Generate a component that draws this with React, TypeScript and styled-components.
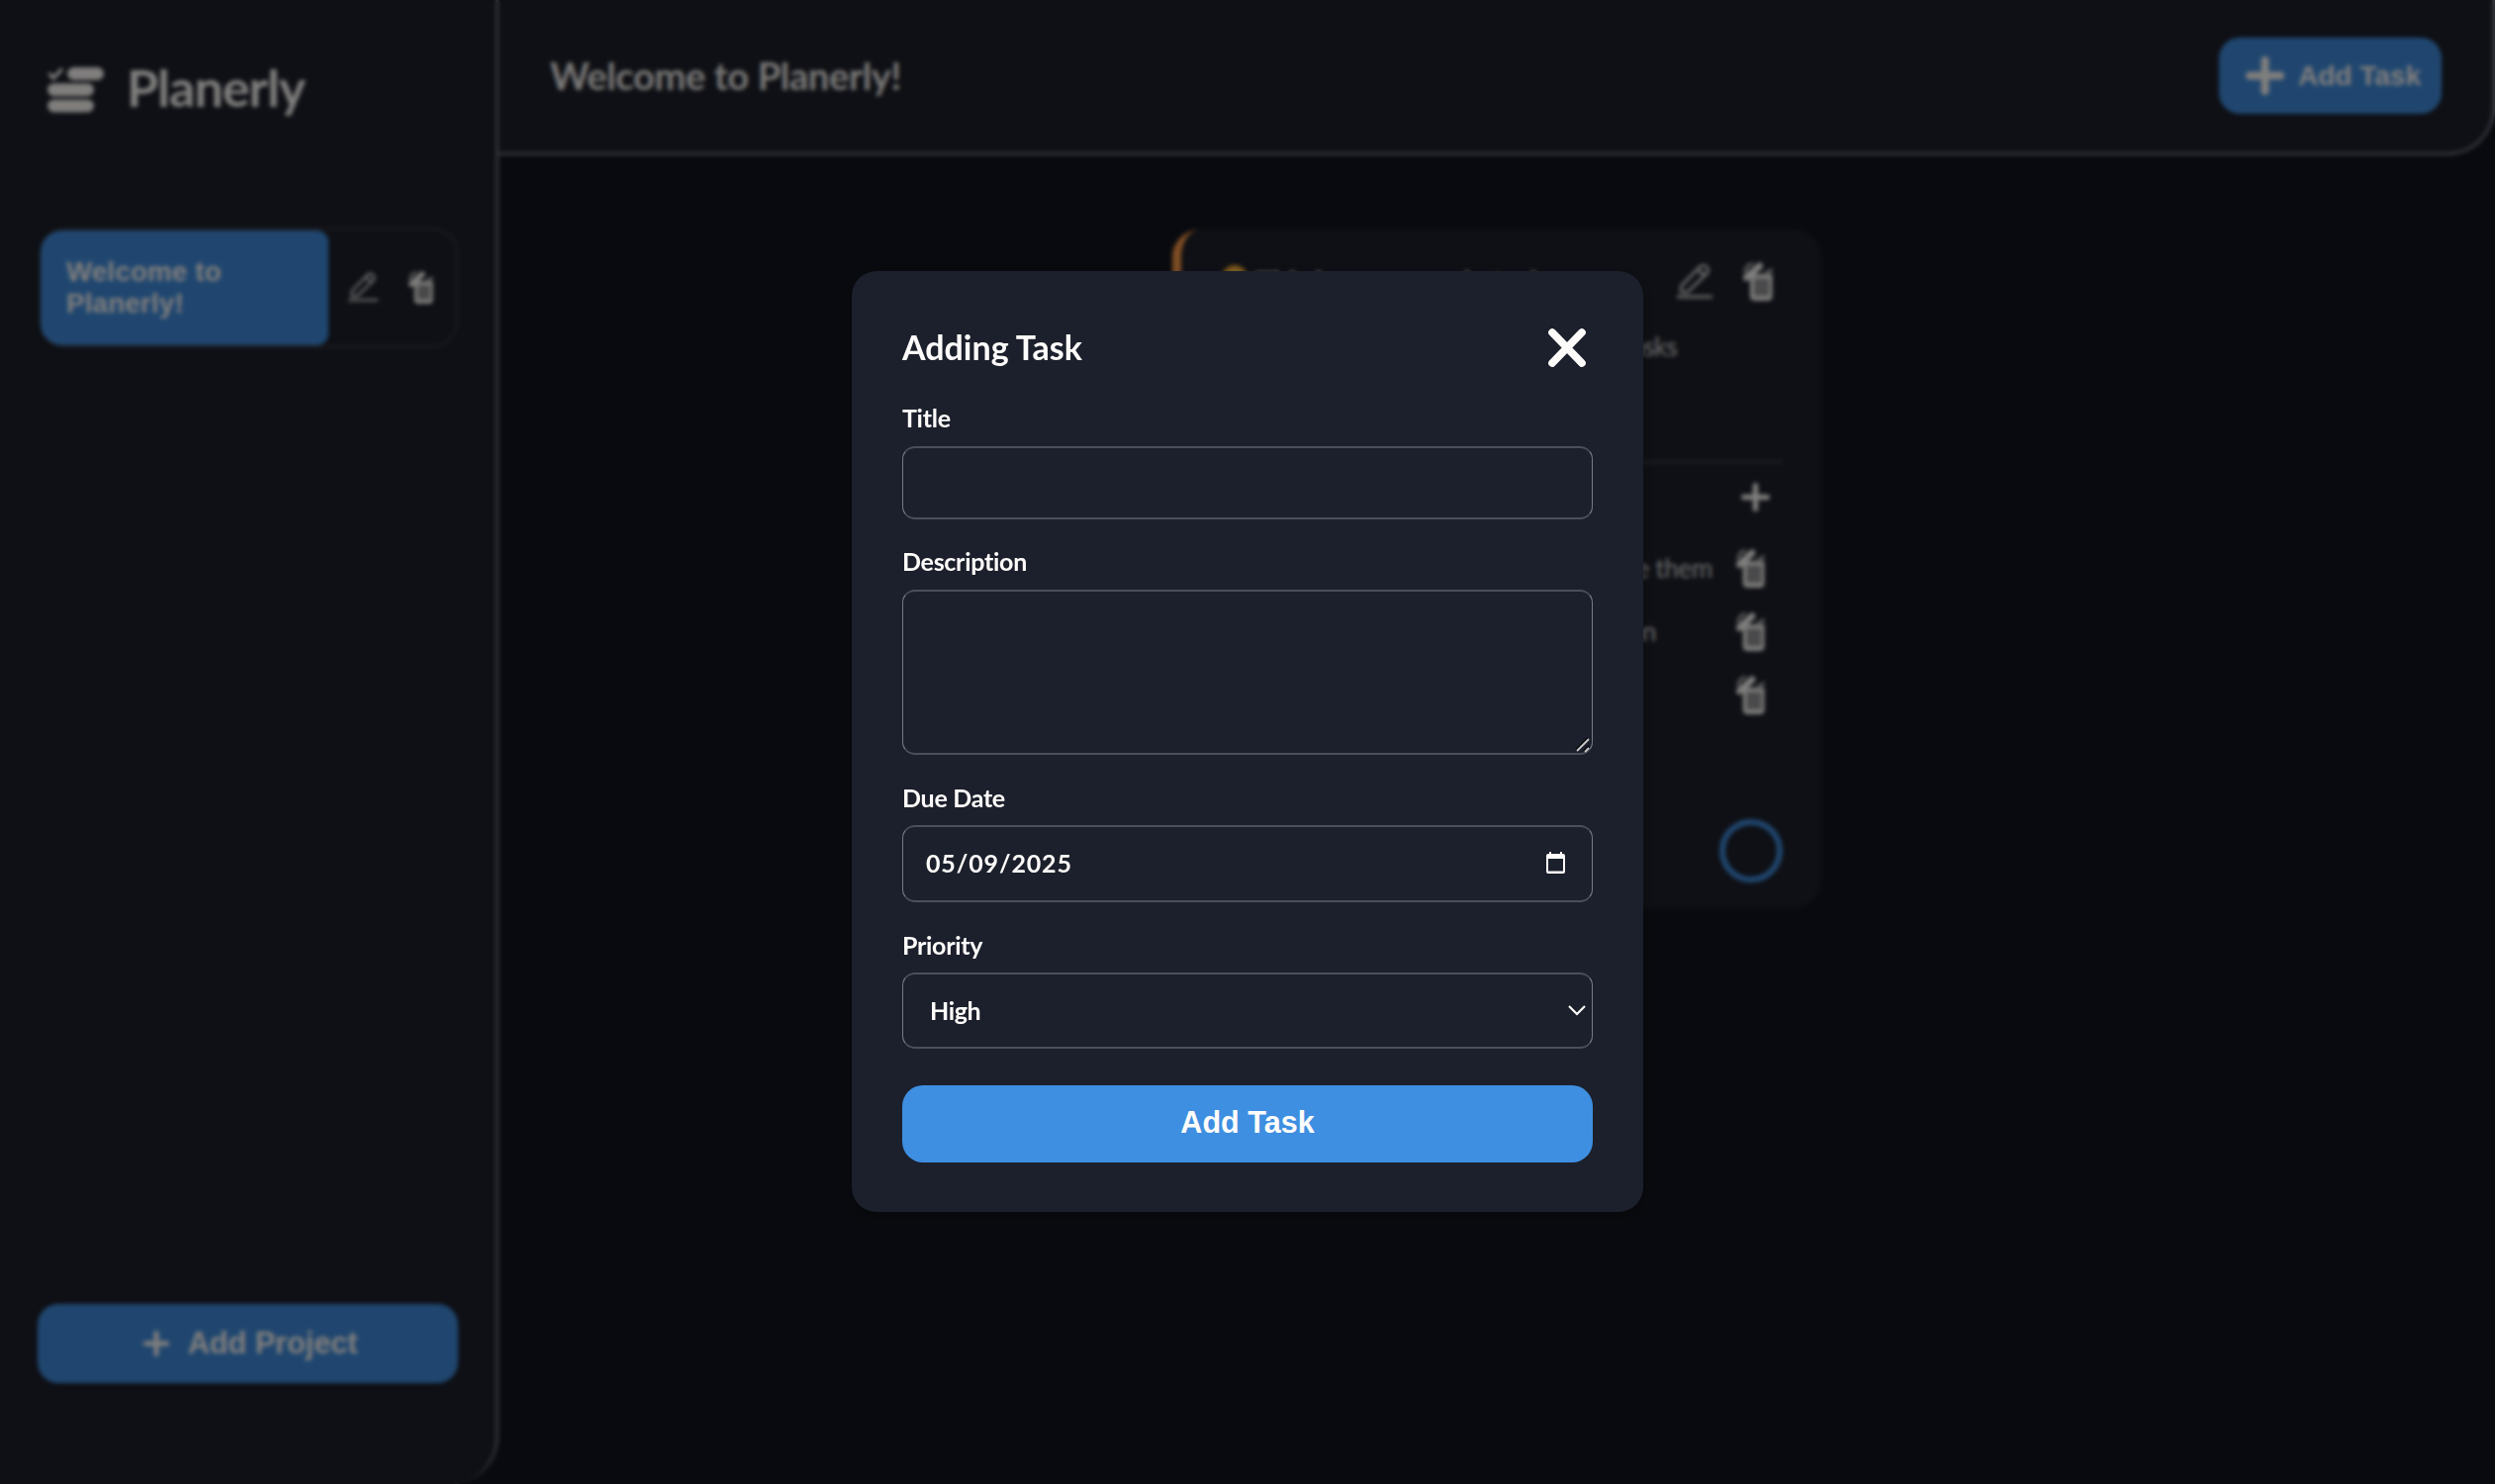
import React from 'react';
import styled, { createGlobalStyle } from 'styled-components';

const humanist = `Lato, "Open Sans", sans-serif`;
const grotesque = `"Liberation Sans", Arial, sans-serif`;

const GlobalStyle = createGlobalStyle`
  *, *::before, *::after { box-sizing: border-box; }
  html, body { margin: 0; height: 100%; background: #12151e; overflow: hidden; }
  body { font-family: ${humanist}; color: #fefcfa; }
  h1, h2, h3, p { margin: 0; font-weight: 700; }
  button { border: 0; cursor: pointer; font-family: ${grotesque}; font-weight: 700; color: #fefcfa; }
`;

const Page = styled.div`
  display: grid;
  grid-template-columns: 504px 1fr;
  height: 1500px;
  width: 2522px;
`;

const Sidebar = styled.aside`
  display: flex;
  flex-direction: column;
  background: #1d202a;
  border-right: 3px solid #666b78;
  border-bottom-right-radius: 48px;
  padding: 59px 38px 102px 38px;
`;

const Brand = styled.div`
  display: flex;
  align-items: center;
  height: 64px;
  padding-left: 10px;
  gap: 23px;
`;

const BrandName = styled.h1`
  font-size: 52px;
  line-height: 64px;
  padding-bottom: 7px;
  letter-spacing: -1px;
  white-space: nowrap;
`;

const ProjectRow = styled.div`
  display: flex;
  margin-top: 107px;
  margin-left: 2px;
  width: 423px;
  height: 122px;
  border: 3px solid #30323b;
  border-left-width: 1px;
  border-radius: 25px;
`;

const ProjectName = styled.button`
  width: 291px;
  padding: 0 26px;
  text-align: left;
  font-size: 27.5px;
  line-height: 32px;
  letter-spacing: 0.3px;
  background: #408ddf;
  border-radius: 22px 12px 12px 22px;
`;

const ProjectActions = styled.div`
  flex: 1;
  display: flex;
  align-items: center;
  padding: 0 0 2px 20px;
  gap: 31px;
`;

const AddProject = styled.button`
  display: flex;
  align-items: center;
  justify-content: center;
  gap: 19px;
  width: 425px;
  height: 80px;
  margin-top: auto;
  padding: 0 0 1px 10px;
  border-radius: 21px;
  background: #408ddf;
  font-size: 30.6px;
  svg { margin-left: -5px; }
`;

const Main = styled.main`
  display: flex;
  flex-direction: column;
`;

const Header = styled.header`
  display: flex;
  align-items: center;
  justify-content: space-between;
  height: 157px;
  background: #1d202a;
  border: solid #666b78;
  border-width: 0 3px 3px 0;
  border-bottom-right-radius: 48px;
  padding: 0 51px 1px 52px;
`;

const ProjectTitle = styled.h2`
  padding-bottom: 2px;
  font-size: 38px;
  letter-spacing: -0.35px;
  color: #f2f0ee;
`;

const AddTask = styled.button`
  display: flex;
  align-items: center;
  gap: 14px;
  width: 225px;
  height: 77px;
  padding: 0 0 0 27px;
  border-radius: 21px;
  background: #408ddf;
  font-size: 28px;
`;

const Board = styled.section`
  display: flex;
  justify-content: center;
  padding-top: 75px;
`;

const Card = styled.article`
  display: flex;
  flex-direction: column;
  width: 656px;
  height: 686px;
  padding: 29px 39px 26px 41px;
  background: #1d202a;
  border-left: 9px solid #fb9a48;
  border-radius: 28px;
`;

const CardHead = styled.div`
  display: flex;
  flex: none;
  align-items: center;
  height: 46px;
`;

const PriorityDot = styled.span`
  width: 26px;
  height: 26px;
  margin: 0 8px 6px 0;
  border-radius: 50%;
  background: radial-gradient(circle, #ffd060 30%, #f59a20 75%);
`;

const CardTitle = styled.h3`
  flex: 1;
  padding-top: 2px;
  font-size: 30px;
  line-height: 40px;
  letter-spacing: -0.55px;
`;

const CardTools = styled.div`
  display: flex;
  align-items: center;
  gap: 31px;
  margin-right: 10px;
`;

const CardText = styled.p`
  flex: none;
  height: 130px;
  margin-top: 25px;
  padding-right: 107px;
  text-align: right;
  white-space: nowrap;
  font-size: 26px;
  line-height: 36px;
  font-weight: 400;
  letter-spacing: -0.7px;
  color: #d8d8d8;
`;

const Divider = styled.hr`
  width: 100%;
  height: 4px;
  margin: 3px 0 0;
  border: 0;
  flex: none;
  background: #32343d;
`;

const SubtaskHead = styled.div`
  display: flex;
  flex: none;
  justify-content: space-between;
  align-items: center;
  height: 66px;
  margin-bottom: 7px;
  padding-right: 13px;
  font-size: 26px;
`;

const Subtask = styled.div<{ $inset: number }>`
  display: flex;
  flex: none;
  justify-content: flex-end;
  align-items: center;
  height: 64px;
  padding-right: 18px;
  white-space: nowrap;
  font-size: 26px;
  letter-spacing: -0.3px;
  color: #d8d8d8;
  span { margin-right: ${(p) => p.$inset}px; }
`;

const DoneToggle = styled.button`
  flex: none;
  width: 64px;
  height: 64px;
  margin-top: auto;
  align-self: flex-end;
  border: 6px solid #408ddf;
  border-radius: 50%;
  background: transparent;
`;

const Backdrop = styled.div`
  position: fixed;
  inset: 0;
  display: flex;
  align-items: flex-start;
  justify-content: center;
  padding-top: 274px;
  background: rgba(0, 0, 0, 0.5);
  backdrop-filter: blur(2px);
`;

const Dialog = styled.form`
  display: flex;
  flex-direction: column;
  width: 800px;
  height: 951px;
  padding: 51px 51px 50px;
  border-radius: 25px;
  background: #1c202c;
  box-shadow: 0 4px 12px rgba(0, 0, 0, 0.2);
`;

const DialogHead = styled.div`
  display: flex;
  flex: none;
  align-items: center;
  justify-content: space-between;
  height: 53px;
  padding-right: 7px;
`;

const DialogTitle = styled.h2`
  padding-bottom: 2px;
  font-size: 34px;
  line-height: 48px;
  letter-spacing: 0;
`;

const CloseButton = styled.button`
  padding: 0;
  line-height: 0;
  background: none;
`;

const Field = styled.label<{ $top: number }>`
  position: relative;
  display: flex;
  flex: none;
  flex-direction: column;
  margin-top: ${(p) => p.$top}px;
`;

const FieldName = styled.span<{ $line?: number }>`
  height: 42px;
  line-height: ${(p) => p.$line ?? 28}px;
  font-size: 25px;
  font-weight: 700;
  letter-spacing: -0.28px;
`;

const box = `
  width: 698px;
  border: solid #4b4e5c;
  border-width: 2px 1px;
  border-left-color: #767a89;
  border-right-color: #767a89;
  border-radius: 13px;
  background: transparent;
  color: #fefcfa;
  font-family: ${humanist};
  font-size: 25px;
  font-weight: 700;
  outline: none;
`;

const TextInput = styled.input`
  ${box}
  height: 74px;
  padding: 0 23px;
`;

const TextArea = styled.textarea`
  ${box}
  height: 167px;
  padding: 20px 23px;
  resize: none;
`;

const ResizeHandle = styled.svg`
  position: absolute;
  right: 2px;
  bottom: 2px;
`;

const DateBox = styled.div`
  ${box}
  display: flex;
  align-items: center;
  justify-content: space-between;
  height: 78px;
  padding: 0 27px 2px 23px;
  letter-spacing: 0.85px;
`;

const SelectBox = styled.div`
  ${box}
  display: flex;
  align-items: center;
  justify-content: space-between;
  height: 77px;
  padding: 0 6px 1px 27px;
  letter-spacing: -0.4px;
`;

const Submit = styled.button`
  flex: none;
  width: 698px;
  height: 78px;
  margin-top: 37px;
  padding: 0 0 4px;
  border-radius: 21px;
  background: #3e8fe1;
  font-size: 30.6px;
`;

const Logo = () => (
  <svg width="57" height="46" viewBox="0 0 57 46" fill="#fefcfa">
    <path d="M1.5 6 L6 11 L15 1.5" fill="none" stroke="#fefcfa" strokeWidth="3.4" />
    <rect x="20" y="0" width="37" height="13" rx="6.5" />
    <rect x="0" y="16.2" width="47" height="13" rx="6.5" />
    <rect x="0" y="32.4" width="47" height="13" rx="6.5" />
  </svg>
);

const Plus = ({ size, weight }: { size: number; weight: number }) => (
  <svg width={size} height={size} viewBox={`0 0 ${size} ${size}`}>
    <path
      d={`M${size / 2} ${weight / 2} V${size - weight / 2} M${weight / 2} ${size / 2} H${size - weight / 2}`}
      stroke="#fefcfa"
      strokeWidth={weight}
      strokeLinecap="round"
    />
  </svg>
);

const Pencil = ({ size }: { size: number }) => (
  <svg width={size} height={size} viewBox="0 0 36 36" fill="none" stroke="#d4d4d4" strokeWidth="2.8" strokeLinejoin="round">
    <path d="M5 22.5 L23.5 3.5 Q26.5 0.8 30 3.6 Q33.2 7 30.6 10.2 L12 28 Q8 30.4 4.6 28.8 Q3.2 26 5 22.5 Z" />
    <path d="M22 5 Q23 11 29 11.5" />
    <path d="M0 34 H36" strokeWidth="3.4" stroke="#bcbcbc" />
  </svg>
);

const Trash = ({ width, height }: { width: number; height: number }) => (
  <svg width={width} height={height} viewBox="0 0 30 40" preserveAspectRatio="none">
    <path d="M7 12.5 H29.5 V35.5 Q29.5 40 25 40 H11.5 Q7 40 7 35.5 Z" fill="#fefcfa" />
    <path d="M11.5 17 H25.5 V35 H11.5 Z" fill="#d0d0d2" />
    <path d="M12.6 17 V35 M16.6 17 V35 M20.6 17 V35 M24.6 17 V35" stroke="#4a4b50" strokeWidth="1.8" />
    <path d="M3.5 16 L16.5 4" stroke="#fefcfa" strokeWidth="7" strokeLinecap="round" />
    <path d="M2 11 Q2 3 10 1.5" stroke="#c8c8c8" strokeWidth="2.8" fill="none" />
    <path d="M19 11.5 L29.5 6 V9.5 L27 11.5 Z" fill="#c8c8c8" />
  </svg>
);

const Close = () => (
  <svg width="38" height="39" viewBox="0 0 38 39">
    <path d="M4 4 L34 35 M34 4 L4 35" stroke="#fefcfa" strokeWidth="7.6" strokeLinecap="round" />
  </svg>
);

const Calendar = () => (
  <svg width="19" height="22" viewBox="0 0 19 22" fill="#fefcfa">
    <path
      fillRule="evenodd"
      d="M3 0 H5 V2 H14 V0 H16 V2 H17 Q19 2 19 4 V20 Q19 22 17 22 H2 Q0 22 0 20 V4 Q0 2 2 2 H3 Z M2 7 V19.5 H17 V7 Z"
    />
  </svg>
);

const Chevron = () => (
  <svg width="18" height="11" viewBox="0 0 18 11">
    <path d="M1 1 L9 9 L17 1" fill="none" stroke="#fefcfa" strokeWidth="2.2" />
  </svg>
);

export default function App() {
  return (
    <>
      <GlobalStyle />
      <Page>
        <Sidebar>
          <Brand>
            <Logo />
            <BrandName>Planerly</BrandName>
          </Brand>
          <ProjectRow>
            <ProjectName>Welcome to Planerly!</ProjectName>
            <ProjectActions>
              <Pencil size={30} />
              <Trash width={25} height={33} />
            </ProjectActions>
          </ProjectRow>
          <AddProject>
            <Plus size={26} weight={5} />
            Add Project
          </AddProject>
        </Sidebar>
        <Main>
          <Header>
            <ProjectTitle>Welcome to Planerly!</ProjectTitle>
            <AddTask>
              <Plus size={39} weight={8} />
              Add Task
            </AddTask>
          </Header>
          <Board>
            <Card>
              <CardHead>
                <PriorityDot />
                <CardTitle>This is an example task</CardTitle>
                <CardTools>
                  <Pencil size={36} />
                  <Trash width={30} height={39} />
                </CardTools>
              </CardHead>
              <CardText>You can add, edit and delete tasks</CardText>
              <Divider />
              <SubtaskHead>
                <span>Subtasks</span>
                <Plus size={29} weight={5.5} />
              </SubtaskHead>
              <Subtask $inset={24}>
                <span>Check subtasks to complete them</span>
                <Trash width={29} height={39} />
              </Subtask>
              <Subtask $inset={81}>
                <span>Add more with the plus button</span>
                <Trash width={29} height={39} />
              </Subtask>
              <Subtask $inset={200}>
                <span>Delete them</span>
                <Trash width={29} height={39} />
              </Subtask>
              <DoneToggle />
            </Card>
          </Board>
        </Main>
      </Page>
      <Backdrop>
        <Dialog>
          <DialogHead>
            <DialogTitle>Adding Task</DialogTitle>
            <CloseButton type="button">
              <Close />
            </CloseButton>
          </DialogHead>
          <Field $top={31}>
            <FieldName $line={26}>Title</FieldName>
            <TextInput />
          </Field>
          <Field $top={29}>
            <FieldName $line={26}>Description</FieldName>
            <TextArea />
            <ResizeHandle width="16" height="16" viewBox="0 0 16 16" fill="none">
              <path d="M1 13 L13 1 M9 14 L14 9" stroke="#08090c" strokeWidth="2" />
              <path d="M2 14 L14 2 M10 15 L14 11" stroke="#c9c9c9" strokeWidth="1.8" />
            </ResizeHandle>
          </Field>
          <Field $top={29}>
            <FieldName>Due Date</FieldName>
            <DateBox>
              05/09/2025
              <Calendar />
            </DateBox>
          </Field>
          <Field $top={29}>
            <FieldName>Priority</FieldName>
            <SelectBox>
              High
              <Chevron />
            </SelectBox>
          </Field>
          <Submit type="button">Add Task</Submit>
        </Dialog>
      </Backdrop>
    </>
  );
}
